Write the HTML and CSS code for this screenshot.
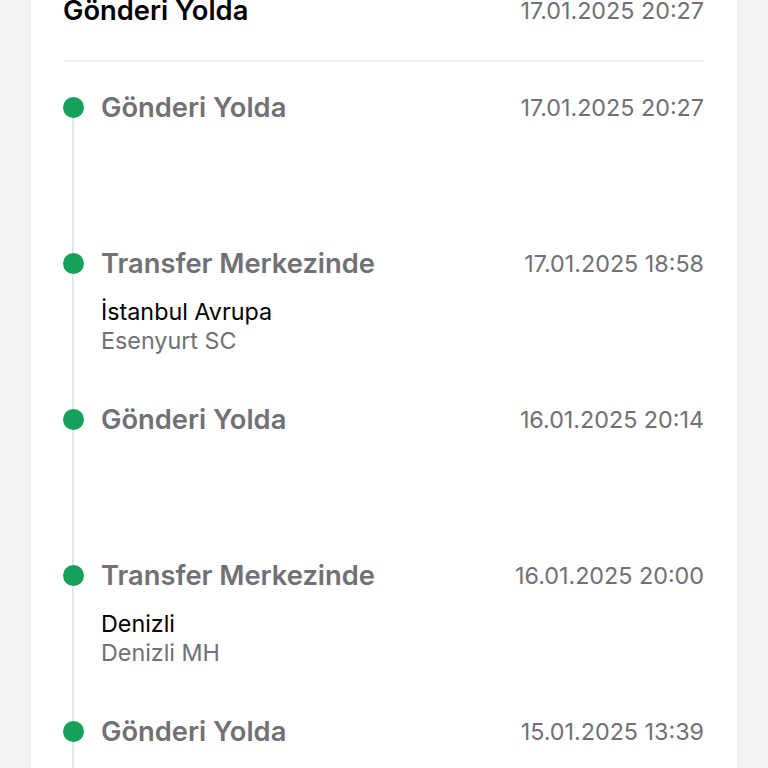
FILE: index.html
```html
<!DOCTYPE html>
<html lang="tr">
<head>
    <meta charset="UTF-8">
    <meta name="viewport" content="width=device-width, initial-scale=1.0">
    <title>Gönderi Takibi</title>
    <link rel="stylesheet" href="styles.css">
</head>
<body>
    <div class="card">
        <div class="status-head">
            <h1>Gönderi Yolda</h1>
            <span class="date">17.01.2025 20:27</span>
        </div>

        <ul class="timeline">
            <li class="step">
                <div class="marker"><span class="dot"></span><span class="line"></span></div>
                <div class="body">
                    <div class="step-head">
                        <h2>Gönderi Yolda</h2>
                        <span class="date">17.01.2025 20:27</span>
                    </div>
                </div>
            </li>
            <li class="step">
                <div class="marker"><span class="dot"></span><span class="line"></span></div>
                <div class="body">
                    <div class="step-head">
                        <h2>Transfer Merkezinde</h2>
                        <span class="date">17.01.2025 18:58</span>
                    </div>
                    <p class="place">İstanbul Avrupa</p>
                    <p class="branch">Esenyurt SC</p>
                </div>
            </li>
            <li class="step">
                <div class="marker"><span class="dot"></span><span class="line"></span></div>
                <div class="body">
                    <div class="step-head">
                        <h2>Gönderi Yolda</h2>
                        <span class="date">16.01.2025 20:14</span>
                    </div>
                </div>
            </li>
            <li class="step">
                <div class="marker"><span class="dot"></span><span class="line"></span></div>
                <div class="body">
                    <div class="step-head">
                        <h2>Transfer Merkezinde</h2>
                        <span class="date">16.01.2025 20:00</span>
                    </div>
                    <p class="place">Denizli</p>
                    <p class="branch">Denizli MH</p>
                </div>
            </li>
            <li class="step">
                <div class="marker"><span class="dot"></span><span class="line"></span></div>
                <div class="body">
                    <div class="step-head">
                        <h2>Gönderi Yolda</h2>
                        <span class="date">15.01.2025 13:39</span>
                    </div>
                </div>
            </li>
        </ul>
    </div>
</body>
</html>
```

FILE: styles.css
```css
body {
    font-family: Inter, "Noto Sans", sans-serif;
    margin: 0;
    padding: 0;
    background-color: #f2f3f5;
    color: #000;
    overflow: hidden;
}

.card {
    margin: -25px 31px 0;
    padding: 20px 33px 0 32px;
    background: #fff;
    box-shadow: 0 0 4px rgba(0, 0, 0, 0.04);
    min-height: 820px;
}

.status-head {
    display: flex;
    justify-content: space-between;
    align-items: center;
    height: 30px;
    padding-bottom: 35px;
    border-bottom: 2px solid #f4f4f6;
}

.status-head h1 {
    margin: 0;
    font-size: 27.3px;
    font-weight: 600;
    color: #000;
}

.date {
    font-size: 23.3px;
    color: #707075;
}

.timeline {
    list-style: none;
    margin: 0;
    padding: 35px 0 0;
}

.step {
    display: flex;
    gap: 18px;
    height: 156px;
}

.marker {
    width: 20px;
    display: flex;
    flex-direction: column;
    align-items: center;
    flex-shrink: 0;
}

.dot {
    width: 21px;
    height: 21px;
    flex-shrink: 0;
    border-radius: 50%;
    background-color: #17a05a;
}

.line {
    flex: 1;
    width: 2px;
    background-color: #e4e4e6;
}

.body {
    flex: 1;
}

.step-head {
    display: flex;
    justify-content: space-between;
    align-items: center;
    height: 21px;
    line-height: 21px;
}

.step-head h2 {
    margin: 0;
    font-size: 27.3px;
    font-weight: 600;
    color: #707075;
}

.place, .branch {
    margin: 0;
    font-size: 23.3px;
    line-height: 29px;
}

.place {
    margin-top: 23px;
    color: #000;
}

.branch {
    color: #707075;
}
```
